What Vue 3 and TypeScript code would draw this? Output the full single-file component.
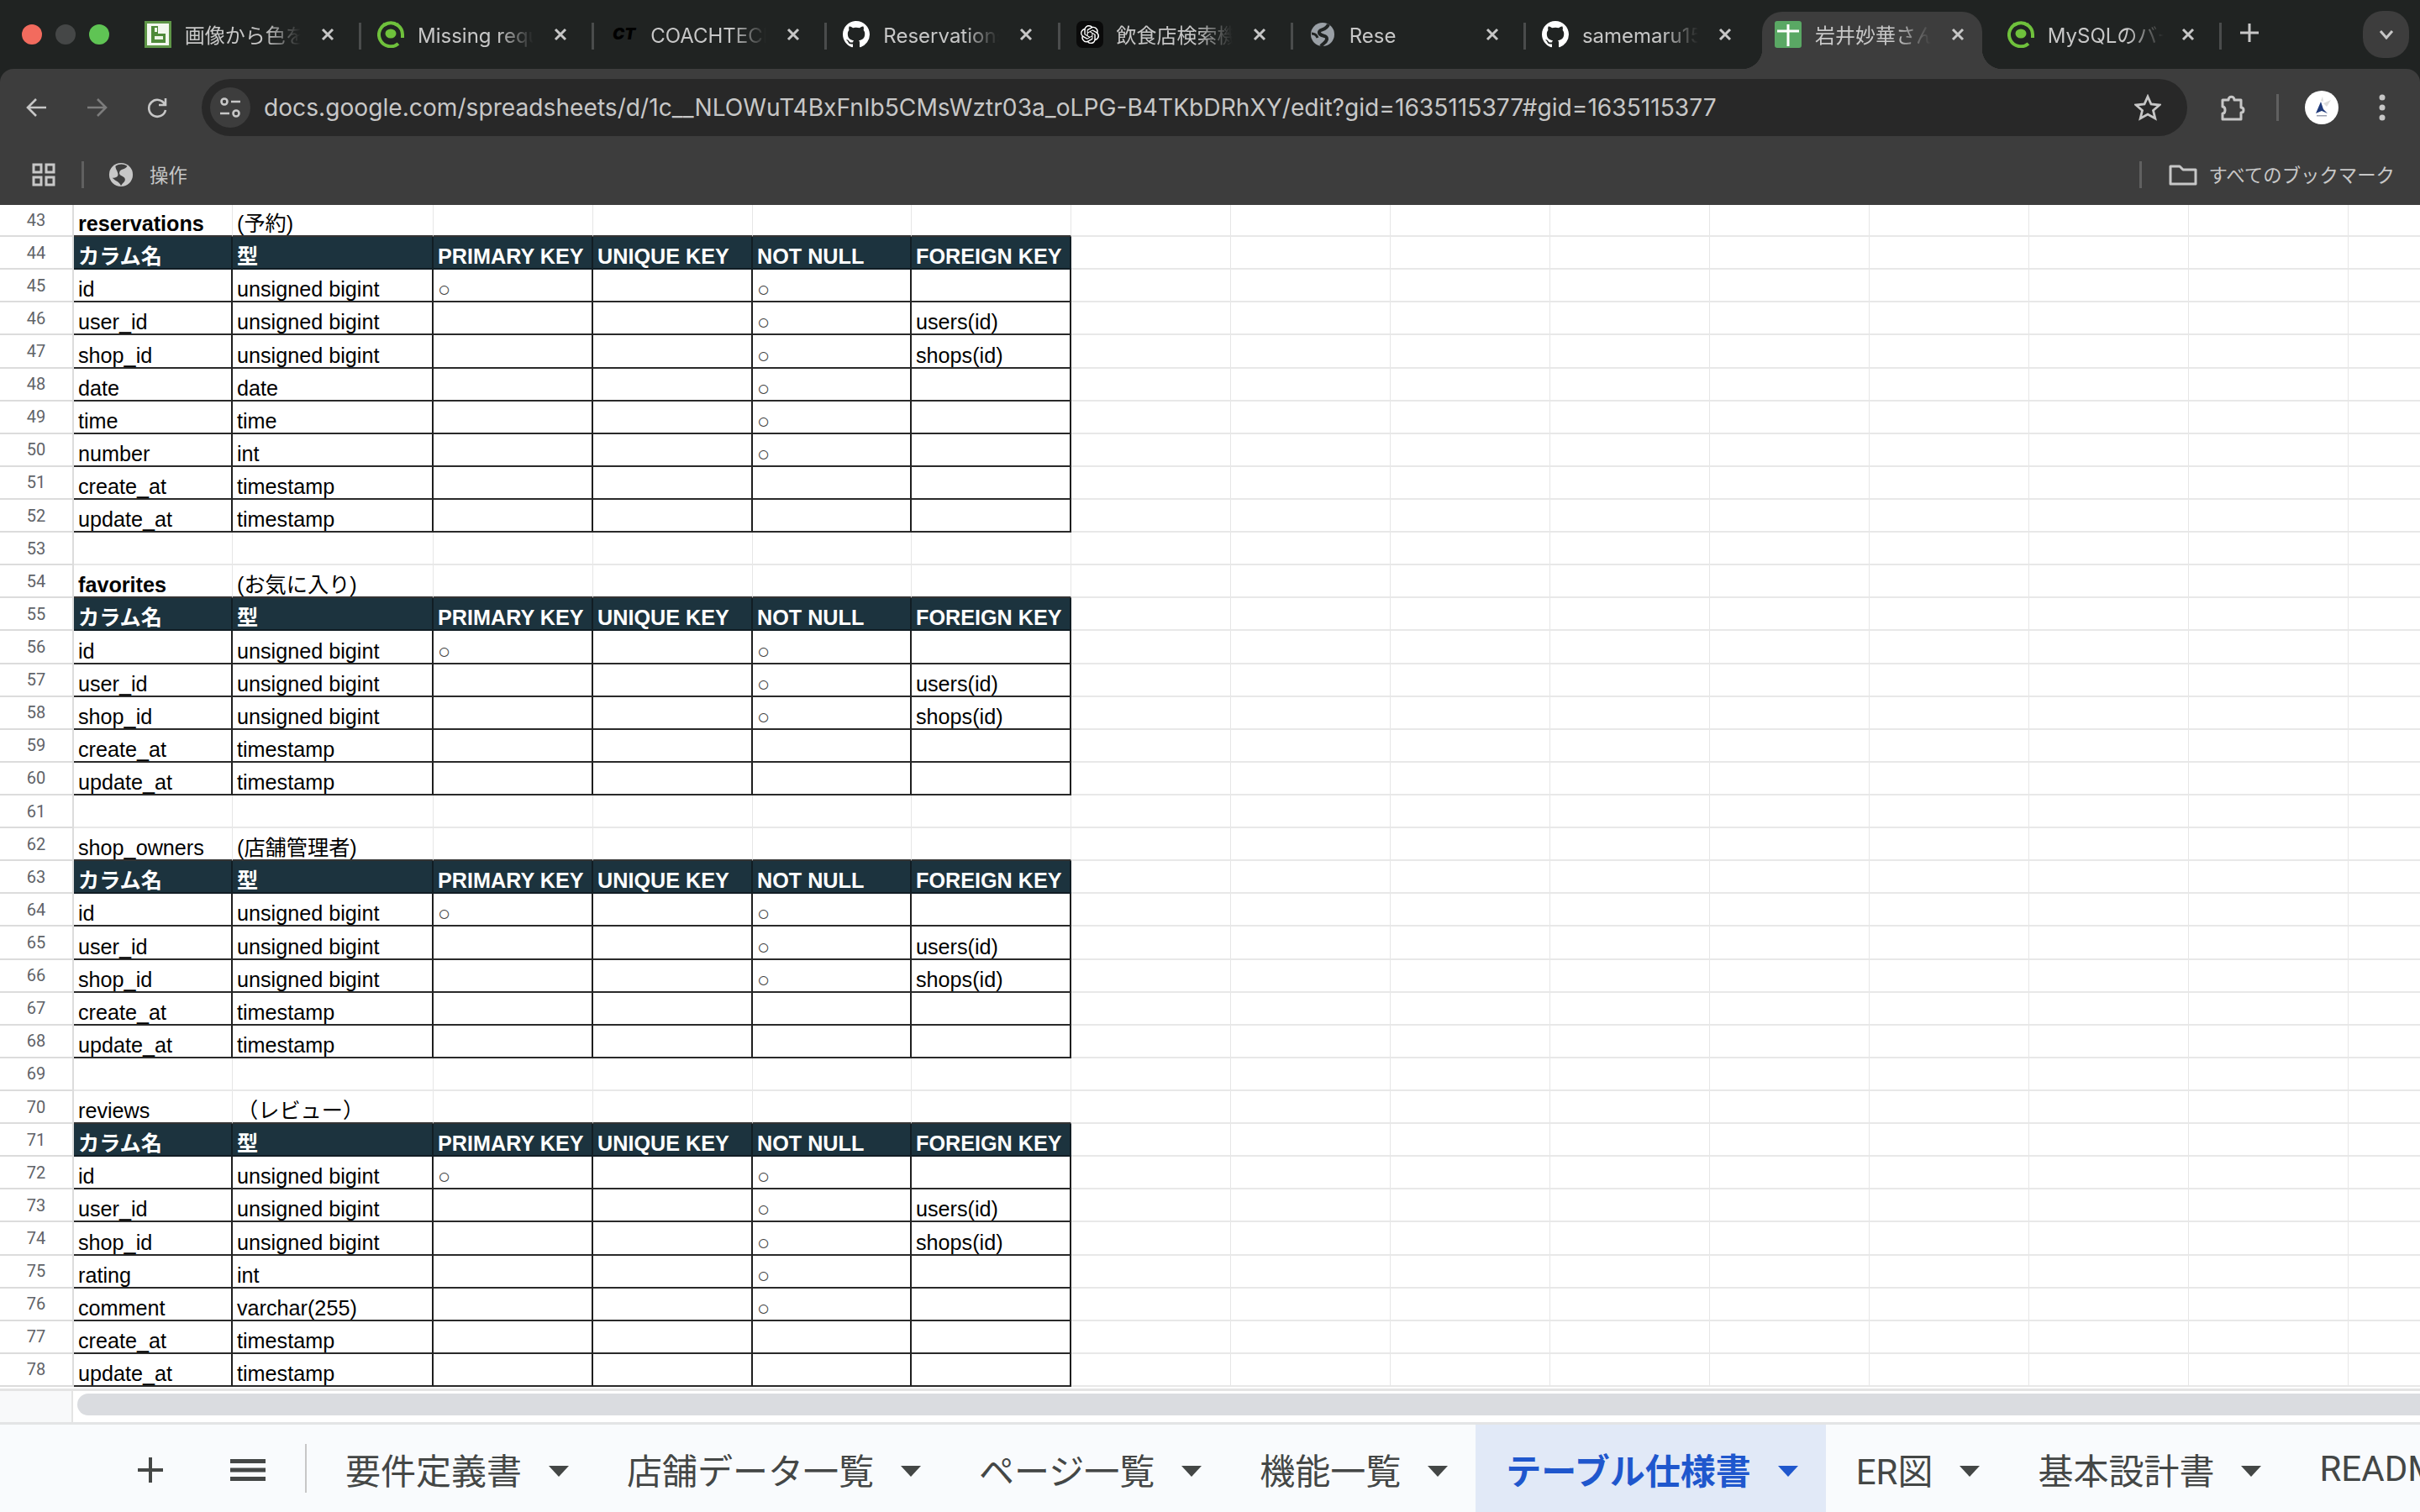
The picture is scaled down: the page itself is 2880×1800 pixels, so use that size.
<template>
  <div class="page">
    <header class="tabstrip">
      <div class="lights">
        <span class="light red"></span>
        <span class="light grey"></span>
        <span class="light green"></span>
      </div>
      <div
        v-for="tab in browserTabs"
        :key="tab.title"
        class="tab"
        :class="{ active: tab.active, last: tab.last }"
      >
        <svg v-if="tab.icon === 'picker'" class="favicon" viewBox="0 0 32 32">
          <rect width="32" height="32" fill="#5f9648" />
          <rect x="3" y="3" width="26" height="26" fill="#f2f7ee" />
          <path d="M8 6h8v9h9v11H8z" fill="#4f8a3a" />
          <rect x="12" y="8" width="3" height="5" fill="#eef5e8" />
          <rect x="12" y="18" width="10" height="4" fill="#eef5e8" />
        </svg>
        <svg v-else-if="tab.icon === 'ring'" class="favicon" viewBox="0 0 32 32">
          <path d="M25 27A14 14 0 1 1 30 16v4" fill="none" stroke="#6fc13c" stroke-width="4" />
          <ellipse cx="16" cy="15" rx="9" ry="8" fill="#212423" />
          <ellipse cx="16" cy="15" rx="6.5" ry="5.5" fill="#6fc13c" />
          <path d="M6 8l1-6 5 3zM26 8l-1-6-5 3z" fill="#6fc13c" />
        </svg>
        <svg v-else-if="tab.icon === 'ct'" class="favicon" viewBox="0 0 32 32">
          <text x="3" y="22" class="ct-mark">CT</text>
        </svg>
        <svg v-else-if="tab.icon === 'github'" class="favicon" viewBox="0 0 16 16">
          <path fill="#fff" :d="githubPath" />
        </svg>
        <svg v-else-if="tab.icon === 'knot'" class="favicon" viewBox="0 0 32 32">
          <rect width="32" height="32" rx="7" fill="#0a0a0a" />
          <path transform="translate(5 5) scale(0.92)" fill="#fff" :d="knotPath" />
        </svg>
        <svg v-else-if="tab.icon === 'globe'" class="favicon" viewBox="0 0 32 32">
          <circle cx="16" cy="16" r="14" fill="#9aa0a6" />
          <path d="M23 4C20 12 11 9 12 14c1 5 10 2 9 8-1 4-5 5-7 8" fill="none" stroke="#212423" stroke-width="4" />
          <path d="M3 15c4 0 6 2 7 5" fill="none" stroke="#212423" stroke-width="3" />
        </svg>
        <svg v-else class="favicon" viewBox="0 0 32 32">
          <rect width="32" height="32" rx="3" fill="#5aa864" />
          <rect x="14.5" y="4" width="3" height="26" fill="#fff" />
          <rect x="3" y="10.5" width="26" height="3" fill="#fff" />
        </svg>
        <span class="tab-title">{{ tab.title }}</span>
        <svg class="close" viewBox="0 0 16 16">
          <path d="M2 2l12 12M14 2L2 14" />
        </svg>
        <span v-if="tab.sep" class="tab-sep"></span>
      </div>
      <svg class="new-tab" viewBox="0 0 22 22">
        <path d="M11 0v22M0 11h22" />
      </svg>
      <div class="tab-menu">
        <svg viewBox="0 0 18 12">
          <path d="M2 2l7 8 7-8" />
        </svg>
      </div>
    </header>

    <div class="chrome">
      <div class="toolbar">
        <svg class="nav" viewBox="0 0 26 26">
          <path d="M24 13H3M12 3L2 13l10 10" />
        </svg>
        <svg class="nav dim" viewBox="0 0 26 26">
          <path d="M2 13h21M14 3l10 10-10 10" />
        </svg>
        <svg class="nav reload" viewBox="0 0 26 26">
          <path d="M22 9a10 10 0 1 0 1 7M23 2v8h-8" />
        </svg>
        <div class="omnibox">
          <span class="site-info">
            <svg viewBox="0 0 26 26">
              <circle cx="6" cy="6" r="3.5" />
              <path d="M14 6h11M1 20h11" />
              <circle cx="20" cy="20" r="3.5" />
            </svg>
          </span>
          <span class="url">docs.google.com/spreadsheets/d/1c__NLOWuT4BxFnIb5CMsWztr03a_oLPG-B4TKbDRhXY/edit?gid=1635115377#gid=1635115377</span>
          <svg class="star" viewBox="0 0 32 32">
            <path d="M16 3l4 9 10 1-7.500 6.500L24.800 29 16 24l-8.800 5 2.300-9.500L2 13l10-1z" />
          </svg>
        </div>
        <svg class="puzzle" viewBox="0 0 32 34">
          <path d="M3 8h7c0-5 7-5 7 0h8v9c4 0 4 6 0 6v8H3v-7c4 0 4-8 0-8z" />
        </svg>
        <span class="tool-sep"></span>
        <svg class="avatar" viewBox="0 0 40 40">
          <circle cx="20" cy="20" r="20" fill="#fff" />
          <path d="M13 27l6-14 3 9 5 5-7-3z" fill="#1f3a7a" />
          <path d="M22 15l9-4-5 8zM19 12l2-5 1 6z" fill="#dcdcdc" />
          <rect x="14" y="29" width="12" height="1.500" fill="#9aa0b0" />
        </svg>
        <svg class="dots" viewBox="0 0 8 36">
          <circle cx="4" cy="6" r="3.500" />
          <circle cx="4" cy="18" r="3.500" />
          <circle cx="4" cy="30" r="3.500" />
        </svg>
      </div>
      <div class="bookmarks">
        <svg class="apps" viewBox="0 0 28 28">
          <path d="M2 2h9v9H2zM17 2h9v9h-9zM2 17h9v9H2zM17 17h9v9h-9z" />
        </svg>
        <span class="book-sep"></span>
        <svg class="book-globe" viewBox="0 0 32 32">
          <circle cx="16" cy="16" r="15" fill="#c7c7c7" />
          <path d="M24 5c-3 5-9 3-10 8s6 4 7 8-3 5-5 9c-2-5-7-6-11-10 5 0 8-2 7-6s-3-5-3-9c5-3 10-3 15 0z" fill="#3d3d3d" />
        </svg>
        <span class="book-label">操作</span>
        <span class="book-spacer"></span>
        <span class="book-sep"></span>
        <svg class="folder" viewBox="0 0 34 26">
          <path d="M2 3h11l4 4h15v17H2z" />
        </svg>
        <span class="book-label">すべてのブックマーク</span>
      </div>
    </div>

    <main class="sheet">
      <template v-for="row in rows" :key="row.no">
        <div class="row-no">{{ row.no }}</div>
        <div
          v-for="(cell, i) in row.cells"
          :key="i"
          class="cell"
          :class="[row.kind, { strong: row.strong && i === 0 }]"
        >
          <span :class="{ mark: cell === '○' }">{{ cell }}</span>
        </div>
        <div v-for="n in 9" :key="'e' + n" class="cell"></div>
      </template>
    </main>

    <div class="scrollbar">
      <div class="scroll-corner"></div>
      <div class="scroll-thumb"></div>
    </div>

    <footer class="sheet-tabs">
      <svg class="add-sheet" viewBox="0 0 30 30">
        <path d="M15 0v30M0 15h30" />
      </svg>
      <svg class="all-sheets" viewBox="0 0 42 26">
        <path d="M0 2.500h42M0 13h42M0 23.500h42" />
      </svg>
      <span class="sheet-sep"></span>
      <div
        v-for="sheet in sheetTabs"
        :key="sheet"
        class="sheet-tab"
        :class="{ current: sheet === activeSheet }"
      >
        <span>{{ sheet }}</span>
        <i class="caret"></i>
      </div>
    </footer>
  </div>
</template>

<script setup lang="ts">
type BrowserTab = {
  title: string
  icon: string
  sep: boolean
  active?: boolean
  last?: boolean
}

type Row = {
  no: number
  kind: string
  strong?: boolean
  cells: string[]
}

const githubPath =
  'M8 0C3.58 0 0 3.58 0 8c0 3.54 2.29 6.53 5.47 7.59.4.07.55-.17.55-.38 0-.19-.01-.82-.01-1.49-2.01.37-2.53-.49-2.69-.94-.09-.23-.48-.94-.82-1.13-.28-.15-.68-.52-.01-.53.63-.01 1.08.58 1.23.82.72 1.21 1.87.87 2.33.66.07-.52.28-.87.51-1.07-1.78-.2-3.64-.89-3.64-3.95 0-.87.31-1.59.82-2.15-.08-.2-.36-1.02.08-2.12 0 0 .67-.21 2.2.82.64-.18 1.32-.27 2-.27.68 0 1.36.09 2 .27 1.53-1.04 2.2-.82 2.2-.82.44 1.1.16 1.92.08 2.12.51.56.82 1.27.82 2.15 0 3.07-1.87 3.75-3.65 3.95.29.25.54.73.54 1.48 0 1.07-.01 1.93-.01 2.2 0 .21.15.46.55.38A8.013 8.013 0 0016 8c0-4.42-3.58-8-8-8z'

const knotPath =
  'M22.2819 9.8211a5.9847 5.9847 0 0 0-.5157-4.9108 6.0462 6.0462 0 0 0-6.5098-2.9A6.0651 6.0651 0 0 0 4.9807 4.1818a5.9847 5.9847 0 0 0-3.9977 2.9 6.0462 6.0462 0 0 0 .7427 7.0966 5.98 5.98 0 0 0 .511 4.9107 6.051 6.051 0 0 0 6.5146 2.9001A5.9847 5.9847 0 0 0 13.2599 24a6.0557 6.0557 0 0 0 5.7718-4.2058 5.9894 5.9894 0 0 0 3.9977-2.9001 6.0557 6.0557 0 0 0-.7475-7.0729zm-9.022 12.6081a4.4755 4.4755 0 0 1-2.8764-1.0408l.1419-.0804 4.7783-2.7582a.7948.7948 0 0 0 .3927-.6813v-6.7369l2.02 1.1686a.071.071 0 0 1 .038.052v5.5826a4.504 4.504 0 0 1-4.4945 4.4944zm-9.6607-4.1254a4.4708 4.4708 0 0 1-.5346-3.0137l.142.0852 4.783 2.7582a.7712.7712 0 0 0 .7806 0l5.8428-3.3685v2.3324a.0804.0804 0 0 1-.0332.0615L9.74 19.9502a4.4992 4.4992 0 0 1-6.1408-1.6464zM2.3408 7.8956a4.485 4.485 0 0 1 2.3655-1.9728V11.6a.7664.7664 0 0 0 .3879.6765l5.8144 3.3543-2.0201 1.1685a.0757.0757 0 0 1-.071 0l-4.8303-2.7865A4.504 4.504 0 0 1 2.3408 7.872zm16.5963 3.8558L13.1038 8.364 15.1192 7.2a.0757.0757 0 0 1 .071 0l4.8303 2.7913a4.4944 4.4944 0 0 1-.6765 8.1042v-5.6772a.79.79 0 0 0-.407-.667zm2.0107-3.0231l-.142-.0852-4.7735-2.7818a.7759.7759 0 0 0-.7854 0L9.409 9.2297V6.8974a.0662.0662 0 0 1 .0284-.0615l4.8303-2.7866a4.4992 4.4992 0 0 1 6.6802 4.66zM8.3065 12.863l-2.02-1.1638a.0804.0804 0 0 1-.038-.0567V6.0742a4.4992 4.4992 0 0 1 7.3757-3.4537l-.142.0805L8.704 5.459a.7948.7948 0 0 0-.3927.6813zm1.0976-2.3654l2.602-1.4998 2.6069 1.4998v2.9994l-2.5974 1.4997-2.6067-1.4997Z'

const browserTabs: BrowserTab[] = [
  { title: '画像から色を抽出', icon: 'picker', sep: true },
  { title: 'Missing required parameter', icon: 'ring', sep: true },
  { title: 'COACHTECH', icon: 'ct', sep: true },
  { title: 'Reservations', icon: 'github', sep: true },
  { title: '飲食店検索機能', icon: 'knot', sep: true },
  { title: 'Rese', icon: 'globe', sep: true },
  { title: 'samemaru1500', icon: 'github', sep: false },
  { title: '岩井妙華さん_テーブル', icon: 'sheets', sep: false, active: true },
  { title: 'MySQLのバージョン', icon: 'ring', sep: true, last: true },
]

const sheetTabs = ['要件定義書', '店舗データ一覧', 'ページ一覧', '機能一覧', 'テーブル仕様書', 'ER図', '基本設計書', 'README']
const activeSheet = 'テーブル仕様書'

const bigint = 'unsigned bigint'
const stamp = 'timestamp'

// name, type, primary, not null, foreign
const idRow = ['id', bigint, '○', '', '○', '']
const userRow = ['user_id', bigint, '', '', '○', 'users(id)']
const shopRow = ['shop_id', bigint, '', '', '○', 'shops(id)']
const createRow = ['create_at', stamp, '', '', '', '']
const updateRow = ['update_at', stamp, '', '', '', '']

const tables: { name: string; label: string; strong: boolean; body: string[][] }[] = [
  {
    name: 'reservations',
    label: '(予約)',
    strong: true,
    body: [
      idRow,
      userRow,
      shopRow,
      ['date', 'date', '', '', '○', ''],
      ['time', 'time', '', '', '○', ''],
      ['number', 'int', '', '', '○', ''],
      createRow,
      updateRow,
    ],
  },
  {
    name: 'favorites',
    label: '(お気に入り)',
    strong: true,
    body: [idRow, userRow, shopRow, createRow, updateRow],
  },
  {
    name: 'shop_owners',
    label: '(店舗管理者)',
    strong: false,
    body: [idRow, userRow, shopRow, createRow, updateRow],
  },
  {
    name: 'reviews',
    label: '（レビュー）',
    strong: false,
    body: [
      idRow,
      userRow,
      shopRow,
      ['rating', 'int', '', '', '○', ''],
      ['comment', 'varchar(255)', '', '', '○', ''],
      createRow,
      updateRow,
    ],
  },
]

const headings = ['カラム名', '型', 'PRIMARY KEY', 'UNIQUE KEY', 'NOT NULL', 'FOREIGN KEY']

const rows: Row[] = []
let no = 43
tables.forEach((table, index) => {
  if (index > 0) rows.push({ no: no++, kind: 'blank', cells: ['', '', '', '', '', ''] })
  rows.push({
    no: no++,
    kind: 'title',
    strong: table.strong,
    cells: [table.name, table.label, '', '', '', ''],
  })
  rows.push({ no: no++, kind: 'head', cells: headings })
  table.body.forEach((cells) => rows.push({ no: no++, kind: 'body', cells }))
})
</script>

<style>
html,
body {
  margin: 0;
  background: #fff;
}
</style>

<style scoped>
.page {
  width: 2880px;
  height: 1800px;
  display: flex;
  flex-direction: column;
  overflow: hidden;
  background: #202322;
  font-family: Inter, "Noto Sans CJK JP", sans-serif;
}

/* browser tabs */
.tabstrip {
  position: relative;
  height: 82px;
  flex: none;
  display: flex;
  align-items: center;
  padding-left: 26px;
  color: #c7c7c7;
}

.lights {
  width: 124.800px;
  display: flex;
  gap: 16px;
  flex: none;
}

.light {
  width: 24px;
  height: 24px;
  border-radius: 50%;
}

.red {
  background: #f26b5e;
}

.grey {
  background: #454747;
}

.green {
  background: #5fc454;
}

.tab {
  position: relative;
  width: 277.200px;
  height: 82px;
  box-sizing: border-box;
  padding-left: 21px;
  display: flex;
  align-items: center;
  flex: none;
}

.tab.active {
  width: 262px;
  height: 68px;
  margin: 14px 0 0 6px;
  padding-left: 15px;
  background: #3d3d3d;
  border-radius: 24px 24px 0 0;
}

.tab.active .favicon,
.tab.active .tab-title,
.tab.active .close {
  margin-top: -14px;
}

.tab.active .tab-title {
  margin-top: -11px;
}

.tab.active::before,
.tab.active::after {
  content: "";
  position: absolute;
  bottom: 0;
  width: 24px;
  height: 24px;
}

.tab.active::before {
  left: -24px;
  background: radial-gradient(circle at 0 0, transparent 24px, #3d3d3d 24.500px);
}

.tab.active::after {
  right: -24px;
  background: radial-gradient(circle at 100% 0, transparent 24px, #3d3d3d 24.500px);
}

.tab.last {
  margin-left: 5.600px;
  padding-left: 24px;
}

.tab.last .close {
  margin-left: 21px;
}

.favicon {
  width: 32px;
  height: 32px;
  flex: none;
}

.ct-mark {
  font: italic 900 19px Inter, sans-serif;
  fill: #000;
}

.tab-title {
  width: 138px;
  margin-top: 3px;
  margin-left: 16px;
  flex: none;
  overflow: hidden;
  white-space: nowrap;
  font-size: 24px;
  line-height: 32px;
  mask-image: linear-gradient(to right, #000 70%, transparent 100%);
}

.close {
  width: 16px;
  height: 16px;
  margin-left: 24px;
  flex: none;
  fill: none;
  stroke: #c7c7c7;
  stroke-width: 3;
}

.tab-sep {
  position: absolute;
  right: -2px;
  top: 27px;
  width: 3px;
  height: 32px;
  background: #4a4c4c;
}

.new-tab {
  width: 22px;
  height: 22px;
  margin: -4px 0 0 24px;
  flex: none;
  stroke: #c7c7c7;
  stroke-width: 3;
}

.tab-menu {
  width: 55px;
  height: 56px;
  margin-left: auto;
  margin-right: 13px;
  border-radius: 24px;
  background: #3d3d3d;
  display: flex;
  align-items: center;
  justify-content: center;
}

.tab-menu svg {
  width: 18px;
  height: 12px;
  fill: none;
  stroke: #c7c7c7;
  stroke-width: 3;
}

/* toolbar + bookmarks */
.chrome {
  flex: none;
  height: 162px;
  box-sizing: border-box;
  background: #3d3d3d;
  border-radius: 16px 16px 0 0;
}

.toolbar {
  height: 92px;
  box-sizing: border-box;
  padding-top: 12px;
  display: flex;
  align-items: flex-start;
}

.nav {
  width: 26px;
  height: 26px;
  margin: 21px 0 0 31px;
  flex: none;
  fill: none;
  stroke: #c7c7c7;
  stroke-width: 2.600;
}

.nav.dim {
  margin-left: 45px;
  stroke: #7c7c7c;
}

.nav.reload {
  margin-left: 46px;
}

.omnibox {
  width: 2363px;
  height: 68px;
  margin-left: 40px;
  flex: none;
  box-sizing: border-box;
  padding-left: 10px;
  border-radius: 34px;
  background: #282828;
  display: flex;
  align-items: center;
  color: #c7c7c7;
}

.site-info {
  width: 48px;
  height: 48px;
  border-radius: 50%;
  background: #3d3d3d;
  display: flex;
  align-items: center;
  justify-content: center;
  flex: none;
}

.site-info svg {
  width: 26px;
  height: 26px;
  fill: none;
  stroke: #c7c7c7;
  stroke-width: 2.600;
}

.url {
  margin-left: 16px;
  font-size: 28.170px;
  white-space: nowrap;
}

.star {
  width: 32px;
  height: 32px;
  margin-left: auto;
  margin-right: 31px;
  fill: none;
  stroke: #c7c7c7;
  stroke-width: 2.800;
}

.puzzle {
  width: 32px;
  height: 34px;
  margin: 17px 0 0 39px;
  flex: none;
  fill: none;
  stroke: #c7c7c7;
  stroke-width: 3;
  stroke-linejoin: round;
}

.tool-sep {
  width: 3px;
  height: 32px;
  margin: 18px 0 0 35px;
  background: #606060;
  flex: none;
}

.avatar {
  width: 40px;
  height: 40px;
  margin: 14px 0 0 31px;
  flex: none;
}

.dots {
  width: 8px;
  height: 36px;
  margin: 16px 0 0 48px;
  flex: none;
  fill: #c7c7c7;
}

.bookmarks {
  height: 68px;
  padding-left: 38px;
  display: flex;
  align-items: center;
  color: #c7c7c7;
}

.apps {
  width: 28px;
  height: 28px;
  flex: none;
  fill: none;
  stroke: #c7c7c7;
  stroke-width: 3;
}

.book-sep {
  width: 3px;
  height: 32px;
  margin-left: 31px;
  background: #606060;
  flex: none;
}

.book-globe {
  width: 30px;
  height: 30px;
  margin-left: 29px;
  flex: none;
}

.book-label {
  margin-top: -3px;
  margin-left: 19px;
  font-size: 22.400px;
  white-space: nowrap;
}

.book-spacer {
  flex: 1;
}

.folder {
  width: 34px;
  height: 26px;
  margin-left: 32px;
  flex: none;
  fill: none;
  stroke: #c7c7c7;
  stroke-width: 3;
  stroke-linejoin: round;
}

.bookmarks .book-label:last-child {
  margin-left: 14px;
  margin-right: 30px;
}

/* spreadsheet grid */
.sheet {
  flex: none;
  height: 1409px;
  background: #fff;
  overflow: hidden;
  display: grid;
  grid-template-columns: 88px 189px 239px 190px 190px 189px 190px repeat(9, 190px);
  grid-template-rows: 38.120px repeat(35, 39.120px);
  font-family: "Liberation Sans", "Noto Sans CJK JP", sans-serif;
  font-size: 25.200px;
  color: #000;
}

.row-no {
  box-sizing: border-box;
  border-right: 2px solid #dcdcdc;
  border-bottom: 2px solid #dcdcdc;
  display: flex;
  align-items: center;
  justify-content: center;
  font-family: Roboto, sans-serif;
  font-size: 20px;
  color: #5f6368;
}

.cell {
  box-sizing: border-box;
  min-width: 0;
  padding-left: 5px;
  padding-bottom: 1px;
  border-right: 1px solid #e6e6e6;
  border-bottom: 2px solid #e8e8e8;
  display: flex;
  align-items: flex-end;
  line-height: 26px;
  white-space: nowrap;
}

.cell.body {
  border-right: 2px solid #1e1e1e;
  border-bottom: 2px solid #2a2a2a;
}

.cell.head {
  background: #1c333e;
  color: #fff;
  font-weight: 700;
  border-right: 2px solid #111d24;
  border-bottom: 2px solid #111d24;
}

.cell.title {
  border-bottom-color: #333;
}

.cell.strong {
  font-weight: 700;
}

.mark {
  color: #444;
}

/* scrollbar */
.scrollbar {
  flex: none;
  height: 43px;
  box-sizing: border-box;
  background: #fff;
  border-top: 3px solid #e4e4e4;
  border-bottom: 3px solid #e3e4e5;
  display: flex;
}

.scroll-corner {
  width: 87px;
  background: #f8f9fa;
  border-right: 2px solid #e4e4e4;
  box-sizing: border-box;
}

.scroll-thumb {
  flex: 1;
  height: 26px;
  margin: 3px 0 0 5px;
  border-radius: 13px 0 0 13px;
  background: #dadce0;
}

/* sheet tabs */
.sheet-tabs {
  flex: 1;
  display: flex;
  align-items: stretch;
  overflow: hidden;
  background: #f9fbfd;
  color: #444746;
  font-family: Roboto, "Noto Sans CJK JP", sans-serif;
  font-size: 42px;
}

.add-sheet {
  width: 30px;
  height: 30px;
  margin: 39px 0 0 164px;
  flex: none;
  stroke: #444746;
  stroke-width: 4;
}

.all-sheets {
  width: 42px;
  height: 26px;
  margin: 41px 0 0 80px;
  flex: none;
  stroke: #444746;
  stroke-width: 5;
}

.sheet-sep {
  width: 2px;
  height: 58px;
  margin: 23px 10px 0 47px;
  background: #c7c7c7;
  flex: none;
}

.sheet-tab {
  flex: none;
  display: flex;
  align-items: center;
  gap: 32px;
  padding: 0 33px 0 36px;
  white-space: nowrap;
}

.sheet-tab.current {
  background: #e1e9f7;
  color: #1f57cd;
  font-weight: 700;
}

.caret {
  width: 0;
  height: 0;
  margin-top: 6px;
  border-left: 12px solid transparent;
  border-right: 12px solid transparent;
  border-top: 13px solid currentColor;
}
</style>
